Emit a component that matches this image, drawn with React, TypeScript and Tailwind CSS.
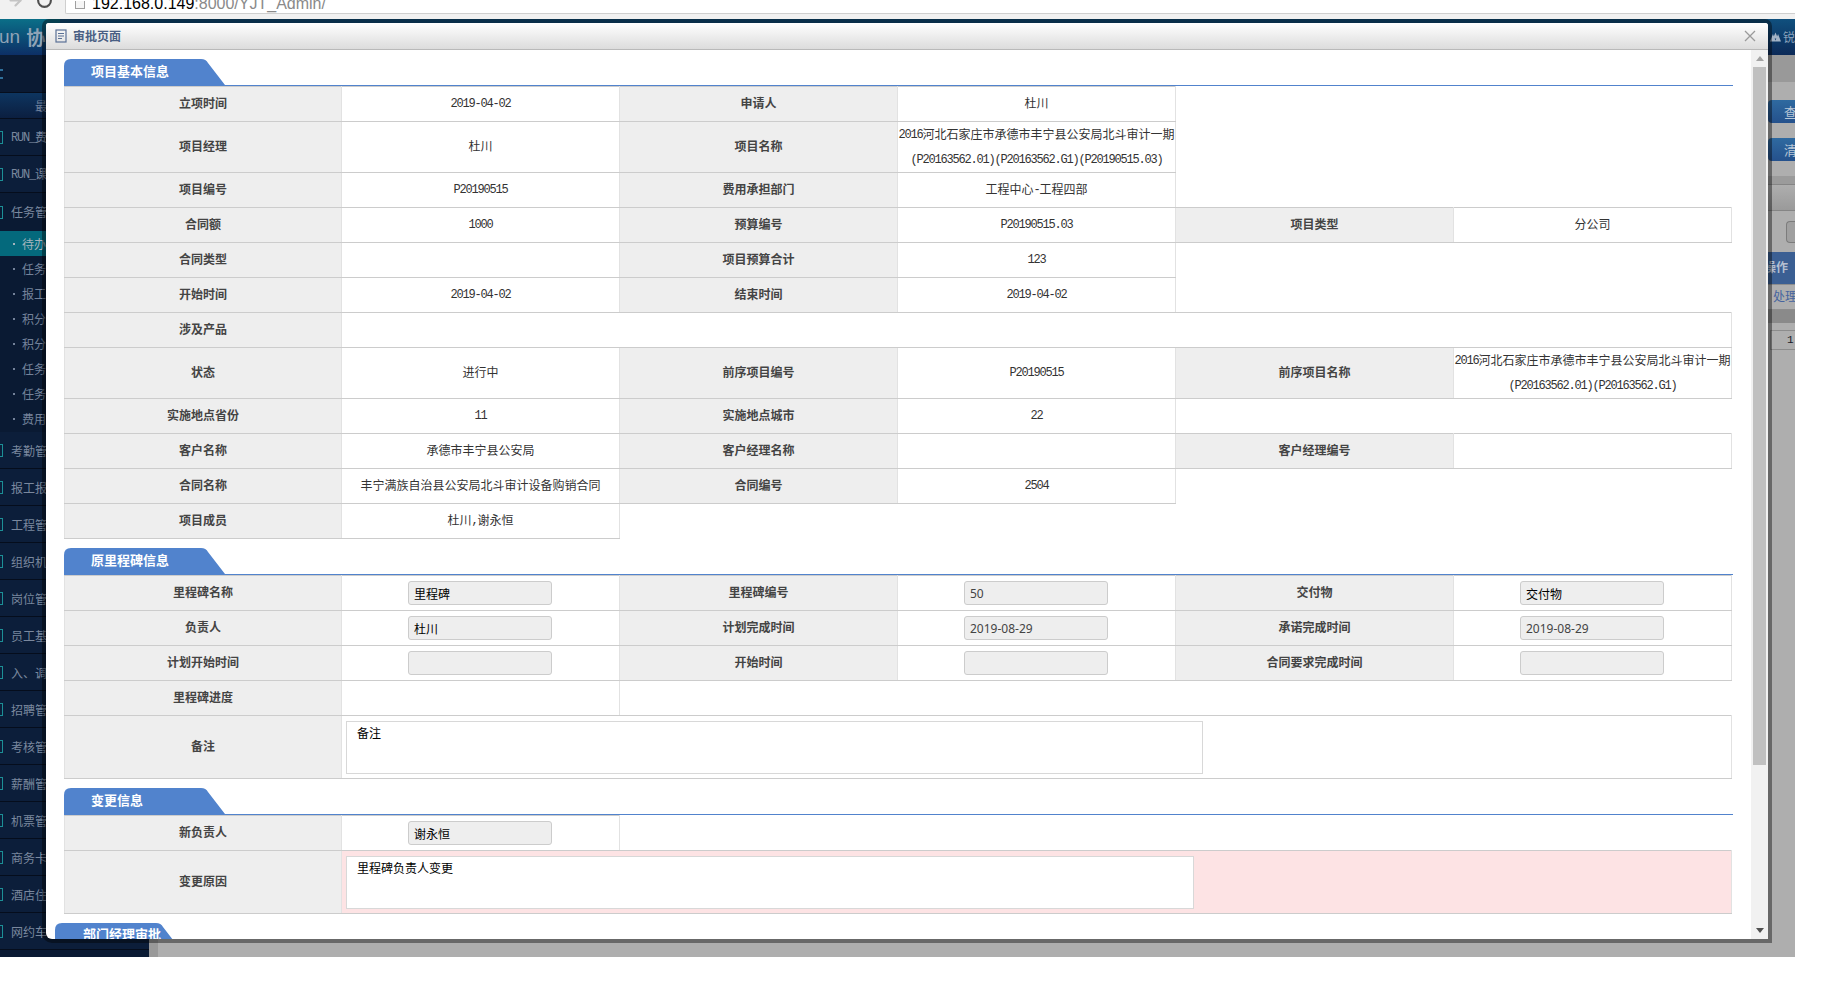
import React from "react";
import { ArrowRight, RotateCw } from "lucide-react";

const Txt = ({ t }: { t: string }) => (
  <>
    {t.split(/([\x00-\x7f]+)/).map((p, i) =>
      /^[\x00-\x7f]+$/.test(p) ? (
        <span key={i} className="relative -top-[1px] [font-family:'Liberation_Mono',monospace] text-[12px] tracking-[-1.2px]">{p}</span>
      ) : (
        <span key={i}>{p}</span>
      )
    )}
  </>
);

const tdBase = "p-0 border-y border-x border-y-[#cccccc] border-x-[#e2e2e2] text-center align-middle";
const L = ({ t, h = "h-[35px]" }: { t: string; h?: string }) => (
  <td className={`${tdBase} ${h} bg-[#eeeeee] font-bold text-[#444444] text-[12px] leading-[16px]`}>
    <div className="pb-[2px]">{t}</div>
  </td>
);
const V = ({ t = "", lines, span }: { t?: string; lines?: string[]; span?: number }) => (
  <td colSpan={span} className={`${tdBase} bg-white text-[#333333] text-[12px] leading-[16px]`}>
    {lines ? (
      lines.map((l) => (
        <div key={l} className="h-[25px] leading-[23px] whitespace-nowrap overflow-hidden">
          <Txt t={l} />
        </div>
      ))
    ) : (
      <div className="h-[18px] pb-[2px] overflow-hidden">
        <Txt t={t} />
      </div>
    )}
  </td>
);
const Field = ({ t = "", latin = false }: { t?: string; latin?: boolean }) => (
  <td className={`${tdBase} bg-white`}>
    <div
      className={`ml-[66px] w-[144px] h-[24px] rounded-[3px] border border-[#cccccc] bg-[#eeeeee] pl-[5px] text-left text-[12px] leading-[23px] ${
        latin ? "[font-family:'Noto_Sans',sans-serif] text-[#444444]" : "text-black"
      }`}
    >
      {t}
    </div>
  </td>
);
const Area = ({ t, w, pink = false }: { t: string; w: string; pink?: boolean }) => (
  <td colSpan={5} className={`${tdBase} ${pink ? "bg-[#fde3e4]" : "bg-white"}`}>
    <div className={`ml-[4px] h-[53px] ${w} border border-[#d8d8d8] bg-white pl-[10px] pt-[2px] text-left text-[12px] leading-[18px] text-black`}>
      {t}
    </div>
  </td>
);

const Section = ({ t }: { t: string }) => (
  <div className="w-[1669px] h-[27px] border-b border-[#5183cd]">
    <div className="relative w-[161px] h-[26px] pl-[27px] text-[13px] font-bold leading-[24px] text-white">
      <svg className="absolute left-0 top-0" width="161" height="26" viewBox="0 0 161 26">
        <path d="M0 26V7Q0 0 7 0H137Q142 0 144 4L161 26Z" fill="#5183cd" />
      </svg>
      <span className="relative">{t}</span>
    </div>
  </div>
);

const LastSection = ({ t }: { t: string }) => (
  <div className="-ml-[9px] h-[27px]">
    <div className="relative w-[125px] h-[26px] pl-[28px] text-[13px] font-bold leading-[22px] text-white whitespace-nowrap">
      <svg className="absolute left-0 top-0" width="125" height="26" viewBox="0 0 125 26">
        <path d="M0 26V7Q0 0 7 0H101Q106 0 108 4L125 26Z" fill="#5183cd" />
      </svg>
      <span className="relative">{t}</span>
    </div>
  </div>
);

const Table = ({ children }: { children: React.ReactNode }) => (
  <table className="w-[1667px] table-fixed border-collapse">
    <colgroup>
      <col className="w-[277px]" />
      <col className="w-[278px]" />
      <col className="w-[278px]" />
      <col className="w-[278px]" />
      <col className="w-[278px]" />
      <col className="w-[278px]" />
    </colgroup>
    <tbody>{children}</tbody>
  </table>
);

const Bar = () => <span className="w-[3px] h-[13px] shrink-0 border border-l-0 border-[#1c8f96]" />;

const NavRow = ({ t, latin = false }: { t: string; latin?: boolean }) => (
  <div className="flex h-[37px] items-center border-b border-[#050d1c] bg-[#0c1e3a] text-[12px] text-[#7a889e] overflow-hidden whitespace-nowrap">
    <Bar />
    <span className="ml-[8px] mt-[2px]">{latin ? <Txt t={t} /> : t}</span>
  </div>
);

const SubRow = ({ t, active = false }: { t: string; active?: boolean }) => (
  <div className={`flex h-[25px] items-center pl-[13px] text-[12px] ${active ? "bg-[#04697c] text-[#a5b4bd]" : "text-[#74829a]"}`}>
    <span className="mr-[7px] h-[2px] w-[2px] bg-current" />
    {t}
  </div>
);

const DocIcon = () => (
  <svg width="12" height="14" viewBox="0 0 12 14" fill="none" stroke="#5a7196" strokeWidth="1.2">
    <rect x="1" y="1" width="10" height="12" />
    <path d="M3 4.5H9M3 7H9M3 9.5H7" />
  </svg>
);

export default function App() {
  return (
    <div className="w-[1841px] h-[990px] overflow-hidden bg-white relative [font-family:'Noto_Sans_CJK_SC',sans-serif]">
      <div className="flex h-[957px] w-[1795px] flex-col">
        {/* browser bar */}
        <div className="flex h-[19px] shrink-0 items-start bg-[#f1f1f1] overflow-hidden">
          <ArrowRight className="ml-[7px] -mt-[8px] shrink-0 text-[#c4c4c4]" size={17} strokeWidth={3} />
          <RotateCw className="ml-[12px] -mt-[8px] shrink-0 text-[#4f4f4f]" size={17} strokeWidth={3} />
          <div className="ml-[12px] flex h-[14px] flex-1 items-end overflow-hidden rounded-bl-[2px] border-b border-l border-[#cfcfcf] bg-white">
            <span className="ml-[9px] mb-[4px] h-[8px] w-[10px] shrink-0 border border-t-0 border-[#a0a0a0] bg-[#f6f6f6]" />
            <span className="ml-[7px] whitespace-nowrap text-[16px] leading-[18px] [font-family:'Liberation_Sans',sans-serif] text-black">
              192.168.0.149<span className="text-[#8a8a8a]">:8000/YJT_Admin/</span>
            </span>
          </div>
        </div>

        {/* app header */}
        <div className="flex h-[36px] shrink-0 items-center justify-between bg-gradient-to-b from-[#10507e] to-[#0c2a58] overflow-hidden">
          <div className="flex h-full w-[60px] items-center bg-gradient-to-b from-[#0b6f88] to-[#0d2f66] text-[19px] text-[#8fa3b6] whitespace-nowrap">
            <span className="[font-family:'Liberation_Sans',sans-serif] -ml-[1px]">un</span>
            <span className="ml-[6px] font-bold">协同</span>
          </div>
          <div className="flex w-[25px] items-center text-[12px] text-[#8ba3bd] whitespace-nowrap">
            <svg width="15" height="12" viewBox="0 0 15 12" fill="#a3b3c6">
              <path d="M4 2L8 12H0ZM11 2L15 12H7ZM7.5 0L11 8H4Z" />
            </svg>
            <span className="ml-[2px]">锐</span>
          </div>
        </div>

        <div className="flex flex-1 overflow-hidden">
          {/* sidebar */}
          <div className="flex w-[149px] shrink-0 flex-col bg-[#0a1a33]">
            <div className="flex h-[37px] items-center bg-[#0a1a33]">
              <span className="w-[3px] h-[10px] border-y-2 border-[#2f6f9a]" />
            </div>
            <div className="h-[27px] bg-gradient-to-b from-[#0d3560] to-[#0b1f40] border-y border-[#060e1d] pl-[35px] text-[12px] leading-[25px] text-[#6d7f99]">最近</div>
            <NavRow t="RUN_费" latin />
            <NavRow t="RUN_课" latin />
            <div className="flex h-[38px] items-center text-[12px] text-[#7a889e] overflow-hidden">
              <Bar />
              <span className="ml-[8px]">任务管</span>
            </div>
            <div className="pb-px">
              <SubRow t="待办" active />
              {["任务", "报工", "积分", "积分", "任务", "任务", "费用"].map((t, i) => (
                <SubRow key={i} t={t} />
              ))}
            </div>
            {["考勤管", "报工报", "工程管", "组织机", "岗位管", "员工基", "入、调", "招聘管", "考核管", "薪酬管", "机票管", "商务卡", "酒店住", "网约车"].map((t) => (
              <NavRow key={t} t={t} />
            ))}
          </div>
          <div className="w-[9px] shrink-0 bg-[#999999]" />

          {/* dimmed page content */}
          <div className="flex flex-1 flex-col items-end bg-[#aeaeae] overflow-hidden">
            <div className="h-[27px] w-full bg-[#999999]" />
            <div className="mt-[18px] h-[23px] w-[27px] rounded-l-[4px] bg-gradient-to-b from-[#2f6aa0] to-[#25518c] pl-[16px] text-[13px] leading-[23px] text-[#b9c7d6] overflow-hidden">查</div>
            <div className="mt-[15px] h-[23px] w-[27px] rounded-l-[4px] bg-gradient-to-b from-[#2f6aa0] to-[#25518c] pl-[16px] text-[13px] leading-[23px] text-[#b9c7d6] overflow-hidden">清</div>
            <div className="mt-[15px] h-[9px] w-full border-b border-[#858585] bg-[#9b9b9b]" />
            <div className="h-[26px] w-full border-b border-[#858585] bg-gradient-to-b from-[#aeaeae] to-[#9a9a9a]" />
            <div className="flex h-[41px] w-full justify-end pt-[10px]">
              <div className="h-[22px] w-[9px] rounded-l-[4px] border border-r-0 border-[#7c7c7c] bg-[#a0a0a0]" />
            </div>
            <div className="flex h-[32px] w-[27px] justify-end bg-[#3b5f93] pr-[7px] text-[12px] font-bold leading-[30px] text-[#b4bfd0] overflow-hidden whitespace-nowrap"><span className="shrink-0">操作</span></div>
            <div className="h-[26px] w-[27px] border-y border-[#8d8d8d] pl-[5px] text-[12px] leading-[22px] text-[#46649f] overflow-hidden whitespace-nowrap">处理</div>
            <div className="h-[13px] w-full bg-[#8a8a8a]" />
            <div className="mt-[7px] h-[20px] w-[25px] border border-r-0 border-[#8c8c8c] pl-[16px] text-[11px] leading-[19px] text-[#1a1a2a] [font-family:'Liberation_Mono',monospace]">1</div>
          </div>
        </div>
      </div>

      {/* approval dialog */}
      <div className="absolute left-[46px] top-[23px] flex h-[916px] w-[1722px] flex-col overflow-hidden rounded-t-[3px] rounded-bl-[6px] bg-white shadow-[0_0_0_4px_rgba(0,0,0,0.4)]">
        <div className="flex h-[27px] shrink-0 items-center border-b border-[#b9b9b9] bg-gradient-to-b from-white to-[#dcdcdc] pl-[9px] pr-[12px]">
          <DocIcon />
          <span className="ml-[6px] text-[12px] font-bold text-[#4a5f84]">审批页面</span>
          <svg className="ml-auto" width="12" height="12" viewBox="0 0 12 12" stroke="#9a9a9a" strokeWidth="1.3">
            <path d="M1 1L11 11M11 1L1 11" />
          </svg>
        </div>
        <div className="flex flex-1 overflow-hidden">
          <div className="flex-1 overflow-hidden pl-[18px] pt-[9px]">
            <Section t="项目基本信息" />
            <Table>
              <tr><L t="立项时间" /><V t="2019-04-02" /><L t="申请人" /><V t="杜川" /></tr>
              <tr><L t="项目经理" h="h-[51px]" /><V t="杜川" /><L t="项目名称" /><V lines={["2016河北石家庄市承德市丰宁县公安局北斗审计一期", "(P20163562.01)(P20163562.G1)(P20190515.03)"]} /></tr>
              <tr><L t="项目编号" /><V t="P20190515" /><L t="费用承担部门" /><V t="工程中心-工程四部" /></tr>
              <tr><L t="合同额" /><V t="1000" /><L t="预算编号" /><V t="P20190515.03" /><L t="项目类型" /><V t="分公司" /></tr>
              <tr><L t="合同类型" /><V /><L t="项目预算合计" /><V t="123" /></tr>
              <tr><L t="开始时间" /><V t="2019-04-02" /><L t="结束时间" /><V t="2019-04-02" /></tr>
              <tr><L t="涉及产品" /><V span={5} /></tr>
              <tr><L t="状态" h="h-[51px]" /><V t="进行中" /><L t="前序项目编号" /><V t="P20190515" /><L t="前序项目名称" /><V lines={["2016河北石家庄市承德市丰宁县公安局北斗审计一期", "(P20163562.01)(P20163562.G1)"]} /></tr>
              <tr><L t="实施地点省份" /><V t="11" /><L t="实施地点城市" /><V t="22" /></tr>
              <tr><L t="客户名称" /><V t="承德市丰宁县公安局" /><L t="客户经理名称" /><V /><L t="客户经理编号" /><V /></tr>
              <tr><L t="合同名称" /><V t="丰宁满族自治县公安局北斗审计设备购销合同" /><L t="合同编号" /><V t="2504" /></tr>
              <tr><L t="项目成员" /><V t="杜川,谢永恒" /></tr>
            </Table>
            <div className="mt-[9px]"><Section t="原里程碑信息" /></div>
            <Table>
              <tr><L t="里程碑名称" /><Field t="里程碑" /><L t="里程碑编号" /><Field t="50" latin /><L t="交付物" /><Field t="交付物" /></tr>
              <tr><L t="负责人" /><Field t="杜川" /><L t="计划完成时间" /><Field t="2019-08-29" latin /><L t="承诺完成时间" /><Field t="2019-08-29" latin /></tr>
              <tr><L t="计划开始时间" /><Field /><L t="开始时间" /><Field /><L t="合同要求完成时间" /><Field /></tr>
              <tr><L t="里程碑进度" /><V /></tr>
              <tr><L t="备注" h="h-[63px]" /><Area t="备注" w="w-[857px]" /></tr>
            </Table>
            <div className="mt-[9px]"><Section t="变更信息" /></div>
            <Table>
              <tr><L t="新负责人" /><Field t="谢永恒" /></tr>
              <tr><L t="变更原因" h="h-[63px]" /><Area t="里程碑负责人变更" w="w-[848px]" pink /></tr>
            </Table>
            <div className="mt-[9px]"><LastSection t="部门经理审批" /></div>
          </div>
          {/* scrollbar */}
          <div className="flex w-[17px] shrink-0 flex-col items-center bg-[#f1f1f1]">
            <div className="flex h-[17px] w-full items-center justify-center">
              <svg width="8" height="5" viewBox="0 0 8 5" fill="#a3a3a3"><path d="M4 0L8 5H0Z" /></svg>
            </div>
            <div className="h-[698px] w-[13px] bg-[#c0c0c0]" />
            <div className="mt-auto flex h-[17px] w-full items-center justify-center">
              <svg width="8" height="5" viewBox="0 0 8 5" fill="#505050"><path d="M0 0H8L4 5Z" /></svg>
            </div>
          </div>
        </div>
      </div>
    </div>
  );
}
